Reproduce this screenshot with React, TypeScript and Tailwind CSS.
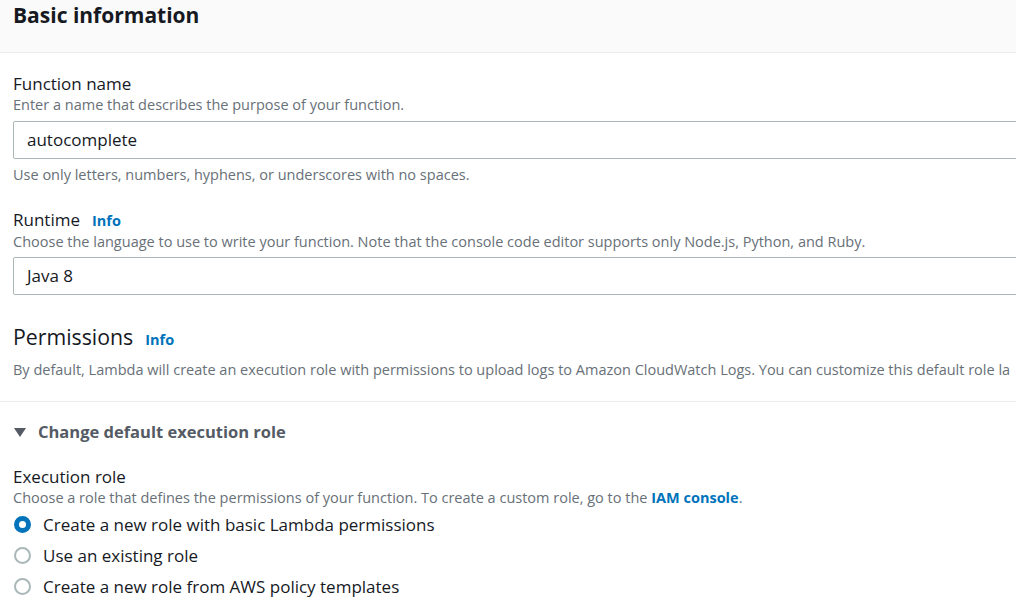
import React from "react";

const font = { fontFamily: '"Open Sans", "Noto Sans", Arial, sans-serif' };

function Info() {
  return <span className="ml-3 text-[14.5px] font-bold text-[#0073bb]">Info</span>;
}

function Radio({ checked, label }: { checked?: boolean; label: string }) {
  return (
    <div className="flex h-[31px] items-center">
      <span
        className={
          checked
            ? "ml-[14px] box-border h-[17px] w-[17px] rounded-full border-[5px] border-[#0073bb] bg-white"
            : "ml-[14px] box-border h-[17px] w-[17px] rounded-full border-2 border-[#aab7b8] bg-white"
        }
      />
      <span className="ml-[12px] text-[17px] text-[#16191f]">{label}</span>
    </div>
  );
}

export default function App() {
  return (
    <div className="h-[608px] w-[1016px] overflow-hidden bg-white text-[#16191f]" style={font}>
      <div className="flex h-[53px] items-start border-b border-[#eaeded] bg-[#fafafa] px-[13px]">
        <h2 className="text-[21px] font-bold leading-[30px] text-[#16191f]">Basic information</h2>
      </div>

      <div className="pl-[13px]">
        <div className="pt-[20px]">
          <div className="text-[17px] leading-[22px]">Function name</div>
          <div className="text-[14.5px] leading-[20px] text-[#687078]">Enter a name that describes the purpose of your function.</div>
          <div className="mt-[6px] flex h-[38px] w-[1020px] items-center rounded-[2px] border border-[#aab7b8] pl-[13px] text-[17px]">
            autocomplete
          </div>
          <div className="mt-[4px] text-[14.5px] leading-[24px] text-[#687078]">Use only letters, numbers, hyphens, or underscores with no spaces.</div>
        </div>

        <div className="pt-[22px]">
          <div className="flex items-baseline text-[17px] leading-[22px]">
            Runtime
            <Info />
          </div>
          <div className="text-[14.5px] leading-[20px] text-[#687078]">
            Choose the language to use to write your function. Note that the console code editor supports only Node.js, Python, and Ruby.
          </div>
          <div className="mt-[5px] flex h-[38px] w-[1020px] items-center rounded-[2px] border border-[#aab7b8] pl-[13px] text-[17px]">
            Java 8
          </div>
        </div>

        <div className="pt-[26px]">
          <div className="flex items-baseline text-[21.3px] leading-[32px]">
            Permissions
            <Info />
          </div>
          <div className="mt-[4px] h-[20px] overflow-hidden whitespace-nowrap text-[14.5px] leading-[20px] text-[#687078]">
            By default, Lambda will create an execution role with permissions to upload logs to Amazon CloudWatch Logs. You can customize this default role la
          </div>
        </div>
      </div>

      <div className="mt-[21px] border-t border-[#eaeded]" />

      <div className="pl-[13px]">
        <div className="flex h-[60px] items-center">
          <svg width="12" height="10" viewBox="0 0 12 10" className="ml-[1px]">
            <path d="M0 1 L12 1 L6 10 Z" fill="#545b64" />
          </svg>
          <span className="ml-[12px] text-[16.5px] font-bold text-[#545b64]">Change default execution role</span>
        </div>

        <div className="pt-[4px]">
          <div className="text-[17px] leading-[22px]">Execution role</div>
          <div className="text-[14.5px] leading-[20px] text-[#687078]">
            Choose a role that defines the permissions of your function. To create a custom role, go to the{" "}
            <span className="font-bold text-[#0073bb]">IAM console</span>.
          </div>
        </div>
      </div>
      <div className="mt-[1px]">
        <Radio checked label="Create a new role with basic Lambda permissions" />
        <Radio label="Use an existing role" />
        <Radio label="Create a new role from AWS policy templates" />
      </div>
    </div>
  );
}
